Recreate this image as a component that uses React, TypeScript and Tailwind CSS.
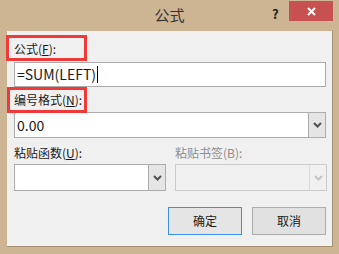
import React from 'react';

const FONT = { fontFamily: '"Noto Sans CJK SC", "Noto Sans", sans-serif' };

function Chevron({ disabled }: { disabled?: boolean }) {
  return (
    <svg width="9" height="6" viewBox="0 0 9 6">
      <polyline points="1,1 4.5,4.5 8,1" fill="none" stroke={disabled ? '#c4c4c4' : '#505050'} strokeWidth="2" />
    </svg>
  );
}

function Select({ value, className, disabled }: { value?: string; className: string; disabled?: boolean }) {
  return (
    <div className={`flex ${className} border ${disabled ? 'border-[#cccccc] bg-[#f0f0f0]' : 'border-[#acacac] bg-white'}`}>
      <div className="flex-1 flex items-center pl-[2px] text-[14px] text-[#1a1a1a]">{value}</div>
      <div className={`w-[17px] flex items-center justify-center border-l ${disabled ? 'border-[#dcdcdc] bg-[#f0f0f0]' : 'border-[#acacac] bg-[#e5e5e5]'}`}>
        <Chevron disabled={disabled} />
      </div>
    </div>
  );
}

export default function App() {
  return (
    <div className="relative w-[339px] h-[254px] bg-[#cdb493] overflow-hidden" style={FONT}>
      {/* Title bar */}
      <div className="h-[31px] flex items-center justify-center text-[15px] text-[#333333] pb-[1px]">公式</div>
      <div className="absolute left-[272px] top-[4px] text-[13px] font-bold text-[#222222]">?</div>
      <div className="absolute left-[289px] top-[1px] w-[44px] h-[20px] bg-[#c75050] flex items-center justify-center">
        <svg width="9" height="9" viewBox="0 0 9 9">
          <path d="M1 1 L8 8 M8 1 L1 8" stroke="#ffffff" strokeWidth="2" />
        </svg>
      </div>

      {/* Client area */}
      <div className="ml-[7px] w-[326px] h-[216px] bg-[#f0f0f0] border-r border-b border-[#a89172] pl-[7px] pt-[7px]">
        <div className="h-[22px] flex items-center text-[12px] text-[#1a1a1a]">
          公式(<span className="underline">F</span>):
        </div>
        <div className="mt-[2px] w-[312px] h-[25px] bg-white border border-[#acacac] flex items-center pl-[2px] text-[14px] text-[#1a1a1a]">
          =SUM(LEFT)<span className="ml-[1px] w-px h-[17px] bg-black" />
        </div>
        <div className="h-[25px] flex items-center text-[12px] text-[#1a1a1a]">
          编号格式(<span className="underline">N</span>):
        </div>
        <Select value="0.00" className="w-[312px] h-[26px]" />
        <div className="h-[26px] pt-[4px] flex text-[12px]">
          <div className="w-[161px] flex items-center text-[#1a1a1a]">
            粘贴函数(<span className="underline">U</span>):
          </div>
          <div className="flex items-center text-[#8d8d8d]">粘贴书签(B):</div>
        </div>
        <div className="flex gap-[9px] h-[27px]">
          <Select className="w-[152px] h-[27px]" />
          <Select className="w-[152px] h-[27px]" disabled />
        </div>
        <div className="mt-[16px] w-[312px] flex justify-end gap-[10px]">
          <button className="w-[74px] h-[28px] border border-[#3c8fe6] bg-[#e5e5e5] text-[12px] text-[#1a1a1a]">确定</button>
          <button className="w-[74px] h-[28px] border border-[#adadad] bg-[#e1e1e1] text-[12px] text-[#1a1a1a]">取消</button>
        </div>
      </div>

      {/* Annotation boxes */}
      <div className="absolute left-[6px] top-[35px] w-[81px] h-[26px] border-[3px] border-[#f03a3a]" />
      <div className="absolute left-[7px] top-[87px] w-[80px] h-[26px] border-[3px] border-[#f03a3a]" />
    </div>
  );
}
